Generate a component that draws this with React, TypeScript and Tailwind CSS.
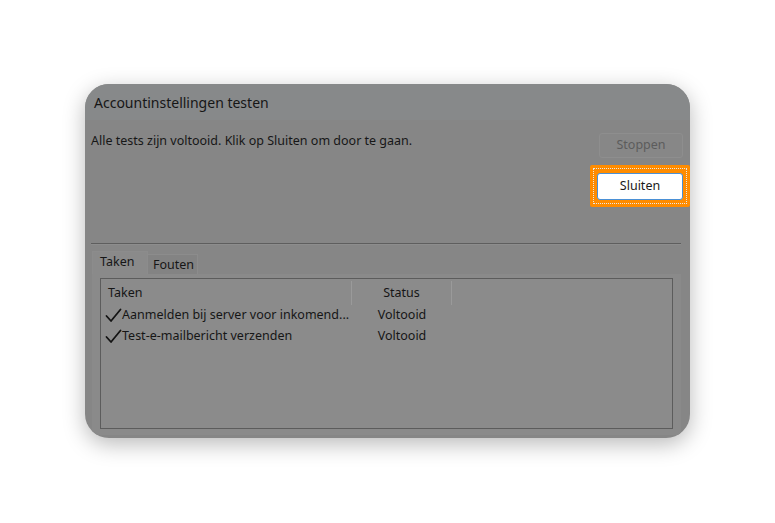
import React from 'react';

const font = { fontFamily: '"Noto Sans", "Open Sans", Arial, sans-serif' };

function Check() {
  return (
    <svg width="17" height="15" viewBox="0 0 17 15" className="shrink-0">
      <path d="M1.5 8 L6 13 L15.5 1.5" fill="none" stroke="#141414" strokeWidth="1.8" strokeLinecap="round" strokeLinejoin="round" />
    </svg>
  );
}

const rows = [
  { task: 'Aanmelden bij server voor inkomend...', status: 'Voltooid' },
  { task: 'Test-e-mailbericht verzenden', status: 'Voltooid' },
];

export default function App() {
  return (
    <div className="min-h-[523px] w-[775px] bg-white pl-[85px] pt-[84px]" style={font}>
      <div className="flex h-[354px] w-[605px] flex-col overflow-hidden rounded-[24px] bg-[#868686] shadow-[0_6px_22px_rgba(0,0,0,0.28)]">
        {/* title */}
        <div className="h-[36px] shrink-0 bg-[#87898a] pl-[9px] pt-[9px] text-[14px] leading-[20px] text-[#161616]">
          Accountinstellingen testen
        </div>

        {/* message + buttons */}
        <div className="flex h-[122px] shrink-0 justify-between">
          <p className="pl-[6px] pt-[12px] text-[12.5px] leading-[18px] text-[#171717]">
            Alle tests zijn voltooid. Klik op Sluiten om door te gaan.
          </p>
          <div className="flex flex-col items-end">
            <button className="mr-[7px] mt-[13px] h-[25px] w-[84px] rounded-[3px] border border-[#8e8e8e] bg-[#878787] text-[12.5px] text-[#5c5c5c]">
              Stoppen
            </button>
            <div className="mt-[7px] rounded-[2px] bg-[#ff8c00] p-[3px]">
              <div className="border border-dotted border-[#e8e8e8] p-[3px]">
                <button className="h-[27px] w-[86px] rounded-[3px] border border-[#4a90d6] bg-white text-[12.5px] text-[#1a1a1a]">
                  Sluiten
                </button>
              </div>
            </div>
          </div>
        </div>

        {/* divider */}
        <div className="mx-[6px] mt-[1px] h-[2px] w-[590px] shrink-0 border-t border-[#5e5e5e] border-b border-b-[#8d8d8d]" />

        {/* tabs */}
        <div className="ml-[7px] mt-[6px] flex h-[23px] shrink-0 items-end">
          <div className="h-[23px] w-[56px] border-l border-r border-t border-[#8c8c8c] bg-[#8a8a8a] pl-[7px] pt-[2px] text-[12.5px] leading-[16px] text-[#161616]">
            Taken
          </div>
          <div className="h-[20px] w-[50px] border-r border-t border-[#8c8c8c] bg-[#838383] pl-[5px] pt-[2px] text-[12.5px] leading-[16px] text-[#161616]">
            Fouten
          </div>
        </div>

        {/* tab panel */}
        <div className="ml-[7px] h-[161px] w-[589px] shrink-0 bg-[#8a8a8a] px-[8px] pt-[4px]">
          <div className="h-[151px] w-[573px] border border-[#5c5c5c] bg-[#8b8b8b]">
            <div className="flex h-[26px] items-stretch pt-[2px] text-[12.5px] text-[#161616]">
              <div className="flex w-[251px] items-center border-r border-[#9a9a9a] pl-[7px]">Taken</div>
              <div className="flex w-[100px] items-center justify-center border-r border-[#9a9a9a]">Status</div>
            </div>
            {rows.map((r) => (
              <div key={r.task} className="flex h-[21px] items-center text-[12.5px] text-[#161616]">
                <div className="flex w-[251px] items-center pl-[4px]">
                  <Check />
                  <span className="whitespace-nowrap">{r.task}</span>
                </div>
                <div className="w-[100px] text-center">{r.status}</div>
              </div>
            ))}
          </div>
        </div>
      </div>
    </div>
  );
}
